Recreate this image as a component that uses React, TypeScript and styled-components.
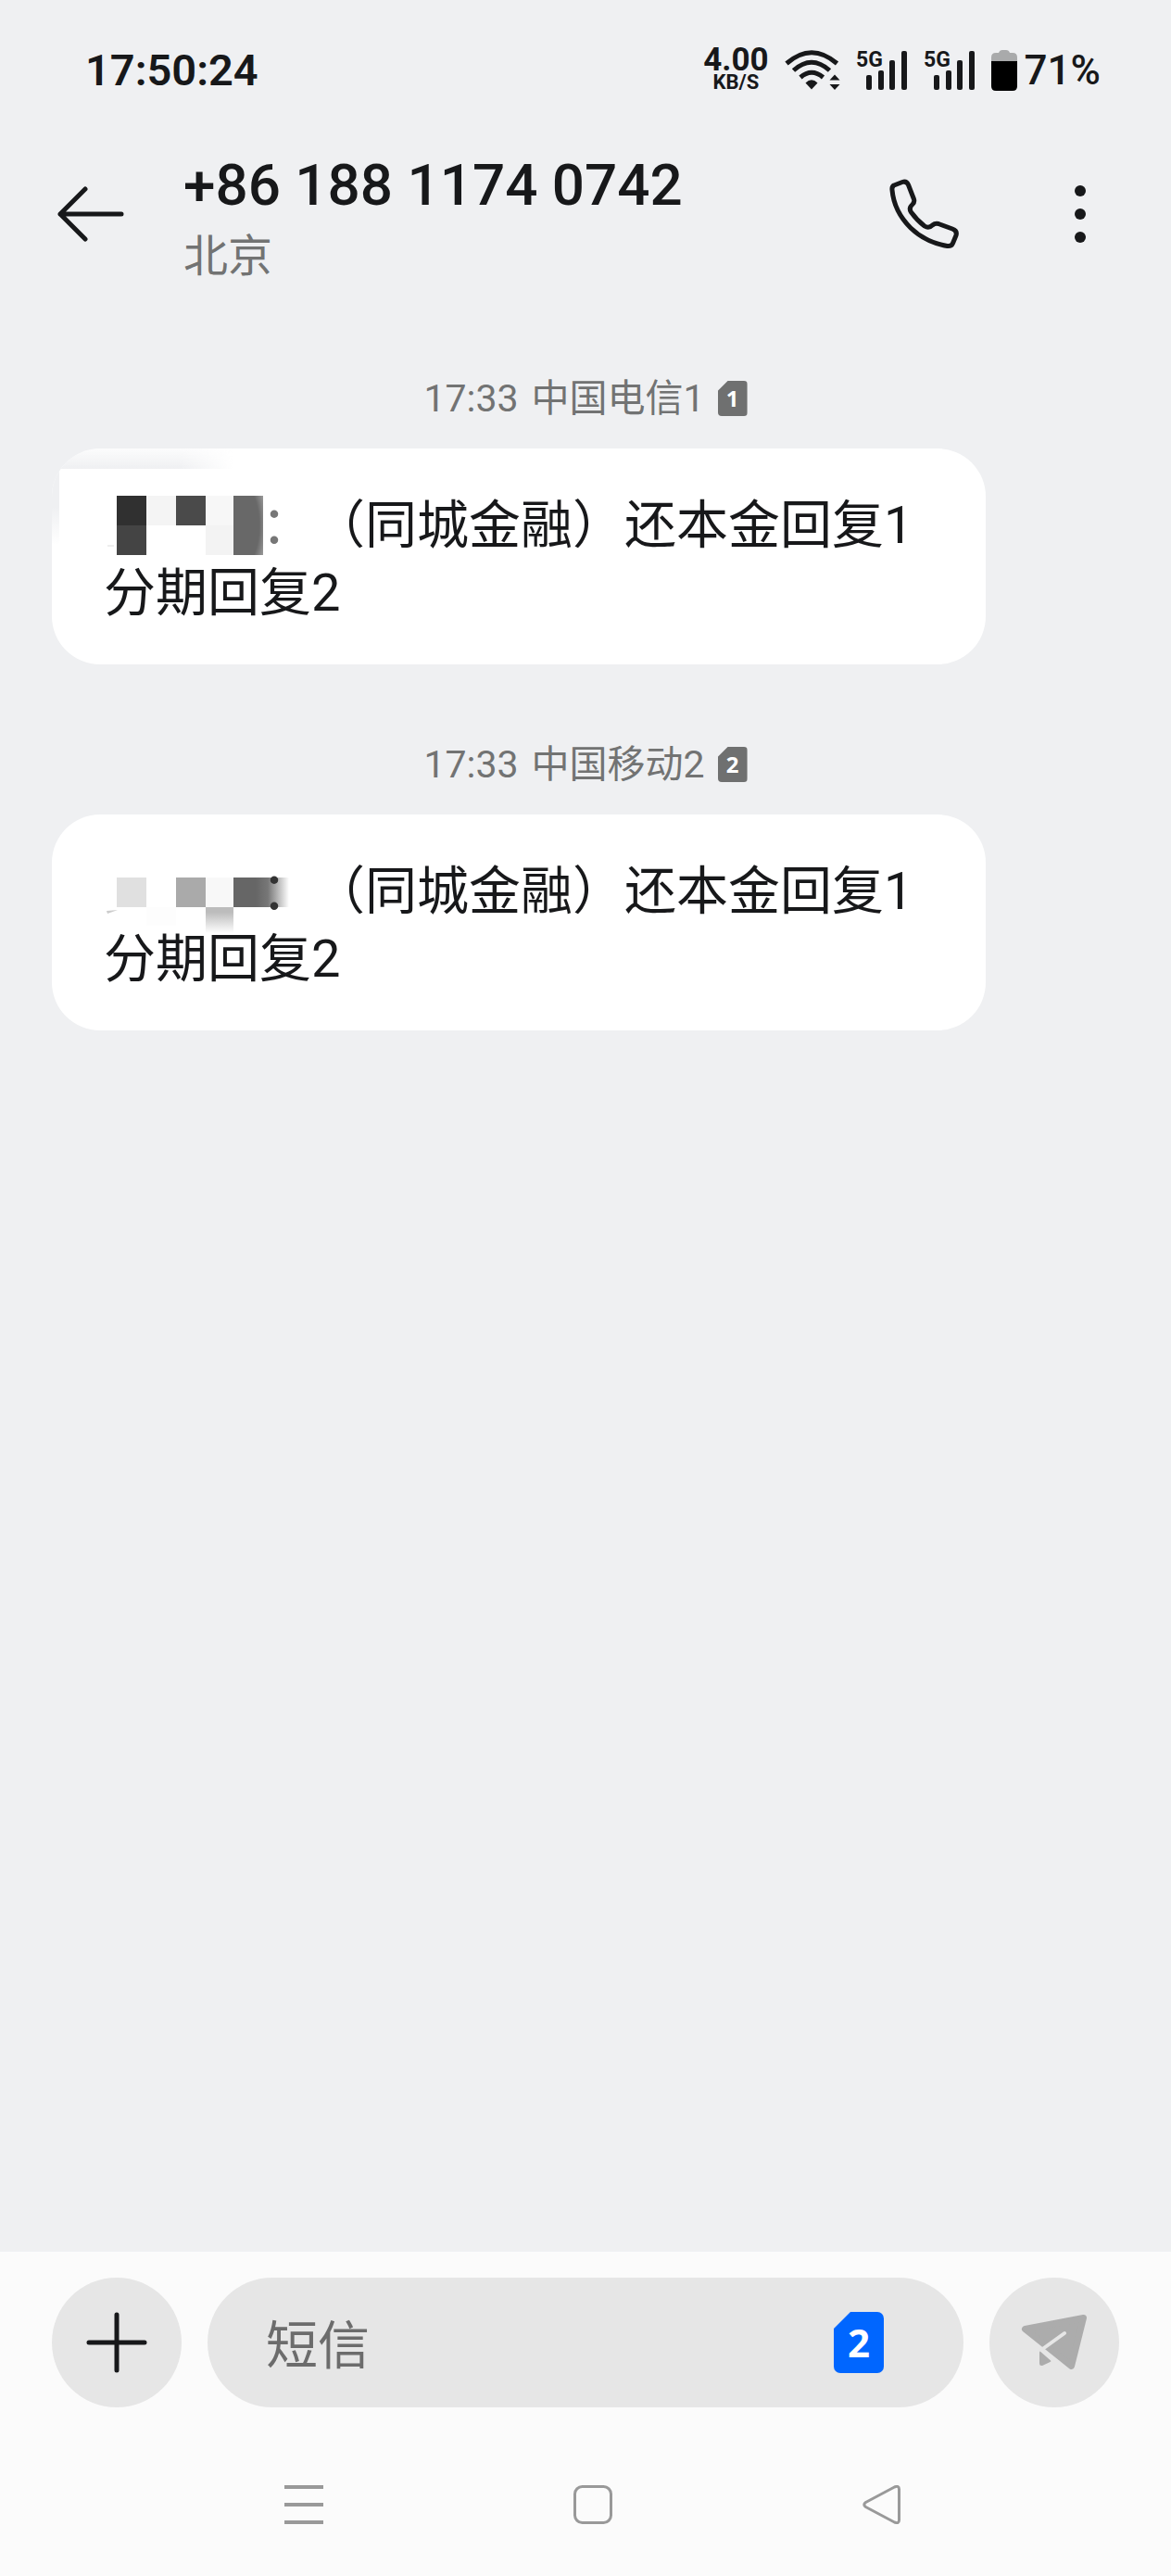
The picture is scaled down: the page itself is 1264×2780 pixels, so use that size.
import React from "react";
import styled, { createGlobalStyle } from "styled-components";

const ink = "#17181a";
const grey = "#727373";

const GlobalStyle = createGlobalStyle`
  *, *::before, *::after { box-sizing: border-box; }
  body {
    margin: 0;
    background: #eff0f2;
    color: ${ink};
    font-family: Roboto, "Noto Sans CJK SC", sans-serif;
  }
  button, input { font: inherit; color: inherit; }
  svg { display: block; flex: none; }
`;

const Page = styled.div`
  min-height: 100vh;
  display: flex;
  flex-direction: column;
`;

const StatusBar = styled.div`
  height: 152px;
  padding: 0 76px 0 92px;
  display: flex;
  align-items: center;
  justify-content: space-between;
`;

const Clock = styled.time`
  font-size: 47px;
  line-height: 56px;
  font-weight: 600;
`;

const StatusItems = styled.div`
  display: flex;
  align-items: center;
  gap: 17px;
`;

const Speed = styled.div`
  display: flex;
  flex-direction: column;
  align-items: center;
  font-weight: 700;
`;

const SpeedValue = styled.span`
  font-size: 35px;
  line-height: 26px;
`;

const SpeedUnit = styled.span`
  font-size: 22px;
  line-height: 22px;
`;

const Battery = styled.div`
  display: flex;
  align-items: center;
  gap: 8px;
  font-size: 44px;
  line-height: 56px;
  font-weight: 500;
`;

const Header = styled.header`
  display: flex;
  align-items: flex-start;
  padding: 0 56px;
`;

const IconButton = styled.button`
  width: 84px;
  height: 158px;
  padding: 0;
  border: 0;
  background: none;
  display: flex;
  align-items: center;
  justify-content: center;
  flex: none;
`;

const Contact = styled.div`
  flex: 1;
  padding: 10px 0 0 58px;
`;

const Title = styled.h1`
  margin: 0;
  font-size: 62px;
  line-height: 76px;
  font-weight: 500;
`;

const Place = styled.p`
  margin: 0;
  font-size: 48px;
  line-height: 78px;
  color: ${grey};
`;

const Actions = styled.div`
  display: flex;
  gap: 84px;
`;

const Thread = styled.main`
  flex: 1;
  display: flex;
  flex-direction: column;
  gap: 78px;
  padding: 84px 56px;
`;

const Entry = styled.article`
  display: flex;
  flex-direction: column;
  gap: 24px;
`;

const Meta = styled.div`
  display: flex;
  align-items: center;
  justify-content: center;
  gap: 14px;
  font-size: 41px;
  line-height: 60px;
  color: ${grey};
`;

const Bubble = styled.div`
  position: relative;
  overflow: hidden;
  width: 87.5%;
  padding: 47px 56px 40px;
  border-radius: 52px;
  background: #fff;
`;

const Message = styled.p`
  margin: 0;
  font-size: 56px;
  line-height: 73px;
  text-spacing-trim: space-all;
`;

const Redacted = styled.span`
  display: inline-block;
  width: 170px;
  height: 64px;
  vertical-align: -13px;

  svg {
    overflow: visible;
  }
`;

const Colon = styled.span<{ $tone: string }>`
  color: ${(p) => p.$tone};
`;

const Smudge = styled.svg`
  position: absolute;
  left: 0;
  top: 0;
`;

const SimShape = styled.span<{ $large?: boolean }>`
  display: flex;
  align-items: center;
  justify-content: center;
  flex: none;
  width: ${(p) => (p.$large ? 54 : 32)}px;
  height: ${(p) => (p.$large ? 66 : 38)}px;
  border-radius: ${(p) => (p.$large ? 7 : 4)}px;
  background: ${(p) => (p.$large ? "#0066ff" : "#6f7070")};
  clip-path: ${(p) =>
    p.$large
      ? "polygon(18px 0, 100% 0, 100% 100%, 0 100%, 0 18px)"
      : "polygon(11px 0, 100% 0, 100% 100%, 0 100%, 0 11px)"};
  color: #fff;
  font-family: "Noto Sans", sans-serif;
  font-size: ${(p) => (p.$large ? 42 : 24)}px;
  line-height: 1;
  font-weight: 700;
`;

const Composer = styled.form`
  display: flex;
  gap: 28px;
  padding: 28px 56px 0;
  background: #fbfbfb;
`;

const RoundButton = styled.button`
  width: 140px;
  height: 140px;
  flex: none;
  padding: 0;
  border: 0;
  border-radius: 50%;
  background: #e6e6e6;
  display: flex;
  align-items: center;
  justify-content: center;
`;

const Field = styled.div`
  flex: 1;
  min-width: 0;
  height: 140px;
  padding: 0 86px 0 63px;
  border-radius: 70px;
  background: #e6e6e6;
  display: flex;
  align-items: center;
`;

const TextBox = styled.input`
  flex: 1;
  min-width: 0;
  height: 92px;
  padding: 8px 0 0;
  border: 0;
  outline: 0;
  background: none;
  font-size: 56px;

  &::placeholder {
    color: #6c6c6c;
    opacity: 1;
  }
`;

const SimButton = styled.button`
  padding: 0;
  border: 0;
  background: none;
`;

const NavBar = styled.nav`
  display: grid;
  grid-template-columns: repeat(3, 1fr);
  padding: 28px 156px 0 172px;
  background: #fbfbfb;
`;

const NavButton = styled.button`
  height: 154px;
  padding: 0;
  border: 0;
  background: none;
  display: flex;
  align-items: center;
  justify-content: center;
`;

const WifiIcon = () => (
  <svg width="60" height="44" viewBox="0 0 60 44" fill="none" stroke={ink} strokeWidth="5">
    <path d="M2 14.500Q29 -9 56.500 14.500" />
    <path d="M9.500 22Q29 4.500 48.500 22" />
    <path d="M17 29.500Q29 19 41.500 29.500" />
    <path d="M22.500 35.500Q29 29 35.500 35.500L29 42.500Z" fill={ink} stroke="none" />
    <path d="M54 26.500L59.500 32.500H48.500ZM54 43L59.500 37H48.500Z" fill={ink} stroke="none" />
  </svg>
);

const SignalIcon = () => (
  <svg width="56" height="60" viewBox="0 -8 56 60" fill={ink}>
    <text x="0" y="18" fontFamily="Roboto, sans-serif" fontSize="23" fontWeight="700">
      5G
    </text>
    <rect x="11" y="27" width="6" height="16" rx="2" />
    <rect x="24" y="22" width="6" height="21" rx="2" />
    <rect x="36" y="11" width="6" height="32" rx="2" />
    <rect x="49" y="1" width="6" height="42" rx="2" />
  </svg>
);

const BatteryIcon = () => (
  <svg width="28" height="44" viewBox="0 0 28 44">
    <path d="M0 12V8Q0 3 5 3H8Q9 0 12 0H16Q19 0 20 3H23Q28 3 28 8V12Z" fill="#a9aaab" />
    <path d="M0 12H28V39Q28 44 23 44H5Q0 44 0 39Z" fill="#000" />
  </svg>
);

const BackIcon = () => (
  <svg width="72" height="60" viewBox="0 0 72 60" fill="none" stroke={ink} strokeWidth="5" strokeLinecap="round" strokeLinejoin="round">
    <path d="M69 30H3M30 3L3 30L30 57" />
  </svg>
);

const PhoneIcon = () => (
  <svg width="76" height="76" viewBox="0 0 76 76" fill="none" stroke={ink} strokeWidth="5" strokeLinejoin="round">
    <path d="M5 7L14 3.500Q18.500 2 20.500 6.500L26.500 22Q27.500 25 25 27.500Q20.500 31.500 23.500 36Q30 45 38 51Q42.500 54 46.500 50Q49.500 47.500 53 48.500L68 54Q73.500 56 72 61L68.500 69.500Q67 73 62.500 72.500Q39 68.500 23 53Q5 35 3 12Q2.500 8.500 5 7Z" />
  </svg>
);

const MoreIcon = () => (
  <svg width="14" height="64" viewBox="0 0 14 64" fill={ink}>
    <circle cx="7" cy="7" r="6" />
    <circle cx="7" cy="32" r="6" />
    <circle cx="7" cy="57" r="6" />
  </svg>
);

const PlusIcon = () => (
  <svg width="66" height="66" viewBox="0 0 66 66" stroke={ink} strokeWidth="5" strokeLinecap="round">
    <path d="M33 3V63M3 33H63" />
  </svg>
);

const SendIcon = () => (
  <svg width="72" height="62" viewBox="0 0 72 62" fill="#acacac" stroke="#acacac" strokeWidth="7" strokeLinejoin="round">
    <path d="M4.500 16.500L67.500 4.500L54.500 56.500Z" />
    <path d="M22.500 42V53.500L30 50Z" strokeWidth="5" />
    <path d="M47 21L22 39L38 53" fill="none" stroke="#e6e6e6" strokeWidth="4" strokeLinecap="round" />
  </svg>
);

const MenuIcon = () => (
  <svg width="42" height="42" viewBox="0 0 42 42" stroke="#999" strokeWidth="4">
    <path d="M0 2H42M0 21H42M0 40H42" />
  </svg>
);

const HomeIcon = () => (
  <svg width="42" height="42" viewBox="0 0 42 42" fill="none" stroke="#999" strokeWidth="3">
    <rect x="1.500" y="1.500" width="39" height="39" rx="8" />
  </svg>
);

const TriangleIcon = () => (
  <svg width="42" height="42" viewBox="0 0 42 42" fill="none" stroke="#999" strokeWidth="3" strokeLinejoin="round">
    <path d="M3.500 18.500L34.500 2Q39.500 0 39.500 4.500V37.500Q39.500 42 34.500 40L3.500 23.500Q0 21 3.500 18.500Z" />
  </svg>
);

const MosaicTall = () => (
  <svg width="172" height="64" viewBox="0 0 172 64" aria-hidden="true">
    <defs>
      <radialGradient id="tallFade" cx="0.1" cy="0.5" r="1.1">
        <stop offset="0.7" stopColor="#686868" />
        <stop offset="1" stopColor="#a8a8a8" />
      </radialGradient>
    </defs>
    <rect x="14" y="0" width="32" height="32" fill="#303030" />
    <rect x="14" y="32" width="32" height="32" fill="#444" />
    <rect x="46" y="0" width="32" height="32" fill="#f4f4f4" />
    <rect x="78" y="0" width="32" height="32" fill="#4a4a4a" />
    <rect x="110" y="0" width="30" height="32" fill="#f7f7f7" />
    <rect x="110" y="32" width="30" height="32" fill="#f3f3f3" />
    <rect x="140" y="0" width="32" height="64" fill="url(#tallFade)" />
    <rect x="4" y="53" width="7" height="2" fill="#eee" />
  </svg>
);

const MosaicLow = () => (
  <svg width="202" height="64" viewBox="0 0 202 64" aria-hidden="true">
    <defs>
      <linearGradient id="lowFade">
        <stop offset="0.4" stopColor="#666" />
        <stop offset="0.62" stopColor="#777" />
        <stop offset="1" stopColor="#fff" />
      </linearGradient>
      <linearGradient id="dropFade" x2="0" y2="1">
        <stop offset="0.2" stopColor="#bcbcbc" />
        <stop offset="1" stopColor="#fff" />
      </linearGradient>
    </defs>
    <rect x="14" y="17" width="32" height="32" fill="#e0e0e0" />
    <rect x="46" y="49" width="32" height="20" fill="#fdfdfd" />
    <rect x="78" y="17" width="32" height="32" fill="#aaa" />
    <rect x="110" y="17" width="30" height="32" fill="#f8f8f8" />
    <rect x="140" y="17" width="60" height="32" fill="url(#lowFade)" />
    <rect x="110" y="49" width="30" height="28" fill="url(#dropFade)" />
    <path d="M3 53L15 52L4 56Z" fill="#ccc" />
  </svg>
);

const CornerSmudge = () => (
  <Smudge width="210" height="104" viewBox="0 0 210 104" aria-hidden="true">
    <defs>
      <linearGradient id="smudgeDown" x2="0" y2="1">
        <stop offset="0" stopColor="#eff0f2" stopOpacity="0.2" />
        <stop offset="1" stopColor="#eff0f2" />
      </linearGradient>
      <linearGradient id="smudgeAcross">
        <stop offset="0.7" stopColor="#fff" />
        <stop offset="1" stopColor="#000" />
      </linearGradient>
      <linearGradient id="smudgeSide" x2="0" y2="1">
        <stop offset="0" stopColor="#eff0f2" />
        <stop offset="0.5" stopColor="#eff0f2" />
        <stop offset="1" stopColor="#fff" />
      </linearGradient>
      <mask id="smudgeMask">
        <rect width="196" height="22" fill="url(#smudgeAcross)" />
      </mask>
    </defs>
    <rect width="196" height="22" fill="url(#smudgeDown)" mask="url(#smudgeMask)" />
    <rect y="22" width="8" height="82" fill="url(#smudgeSide)" />
  </Smudge>
);

const messages = [
  { time: "17:33", carrier: "中国电信1", sim: "1", tone: "#777", tall: true },
  { time: "17:33", carrier: "中国移动2", sim: "2", tone: "#333", tall: false },
];

export default function App() {
  return (
    <Page>
      <GlobalStyle />
      <StatusBar>
        <Clock>17:50:24</Clock>
        <StatusItems>
          <Speed>
            <SpeedValue>4.00</SpeedValue>
            <SpeedUnit>KB/S</SpeedUnit>
          </Speed>
          <WifiIcon />
          <SignalIcon />
          <SignalIcon />
          <Battery>
            <BatteryIcon />
            71%
          </Battery>
        </StatusItems>
      </StatusBar>

      <Header>
        <IconButton type="button" aria-label="返回">
          <BackIcon />
        </IconButton>
        <Contact>
          <Title>+86 188 1174 0742</Title>
          <Place>北京</Place>
        </Contact>
        <Actions>
          <IconButton type="button" aria-label="拨打电话">
            <PhoneIcon />
          </IconButton>
          <IconButton type="button" aria-label="更多">
            <MoreIcon />
          </IconButton>
        </Actions>
      </Header>

      <Thread>
        {messages.map((m) => (
          <Entry key={m.sim}>
            <Meta>
              <time>{m.time}</time>
              <span>{m.carrier}</span>
              <SimShape>{m.sim}</SimShape>
            </Meta>
            <Bubble>
              {m.tall && <CornerSmudge />}
              <Message>
                <Redacted>{m.tall ? <MosaicTall /> : <MosaicLow />}</Redacted>
                <Colon $tone={m.tone}>：</Colon>（同城金融）还本金回复1 分期回复2
              </Message>
            </Bubble>
          </Entry>
        ))}
      </Thread>

      <Composer onSubmit={(e) => e.preventDefault()}>
        <RoundButton type="button" aria-label="添加">
          <PlusIcon />
        </RoundButton>
        <Field>
          <TextBox type="text" placeholder="短信" aria-label="短信" />
          <SimButton type="button" aria-label="切换到另一张卡">
            <SimShape $large>2</SimShape>
          </SimButton>
        </Field>
        <RoundButton type="submit" aria-label="发送">
          <SendIcon />
        </RoundButton>
      </Composer>

      <NavBar>
        <NavButton type="button" aria-label="最近任务">
          <MenuIcon />
        </NavButton>
        <NavButton type="button" aria-label="主屏幕">
          <HomeIcon />
        </NavButton>
        <NavButton type="button" aria-label="后退">
          <TriangleIcon />
        </NavButton>
      </NavBar>
    </Page>
  );
}
